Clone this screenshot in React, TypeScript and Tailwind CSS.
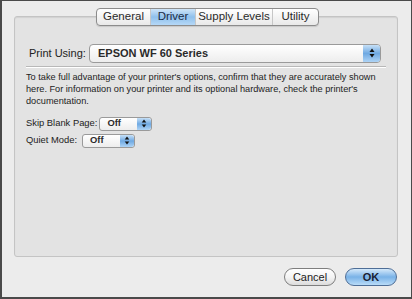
export default function App() {
  const tabs = ["General", "Driver", "Supply Levels", "Utility"];
  const tabW: Record<string, string> = {
    General: "w-[53px]",
    Driver: "w-[45px]",
    "Supply Levels": "w-[77px]",
    Utility: "w-[46px]",
  };

  return (
    <div
      className="w-[412px] h-[299px] bg-[#ececec] border-l-2 border-r border-t border-b-2 border-[#4a4a4a] text-[#111] relative"
      style={{ fontFamily: '"Liberation Sans", Arial, sans-serif' }}
    >
      {/* group box */}
      <div className="absolute left-[12px] top-[15px] w-[384px] h-[241px] bg-[#e3e3e3] border border-[#c4c4c4] rounded-[3px] shadow-[inset_0_1px_1px_rgba(0,0,0,0.08)]">
        <div className="pt-[26px] px-[11px]">
          {/* print using */}
          <div className="flex items-center h-[20px]">
            <span className="text-[11px] ml-[3px] w-[60px] text-[#222]">Print Using:</span>
            <div className="flex-1 mr-[5px] h-[19px] flex items-center bg-gradient-to-b from-white to-[#ededed] border border-[#9a9a9a] rounded-[4px] relative">
              <span className="text-[11px] font-bold ml-[8px] text-[#2a2a2a]">EPSON WF 60 Series</span>
              <Arrows big />
            </div>
          </div>
          <div className="mt-[3px] border-t border-[#b8b8b8] border-b-white border-b h-0" />
          <p className="mt-[3px] text-[9.2px] leading-[12px] text-[#222]">
            To take full advantage of your printer's options, confirm that they are accurately shown here. For information on your printer and its optional hardware, check the printer's documentation.
          </p>
          <div className="mt-[9px] flex items-center h-[15px]">
            <span className="text-[9.4px] mr-[2px] text-[#222]">Skip Blank Page:</span>
            <Popup />
          </div>
          <div className="mt-[2px] flex items-center h-[15px]">
            <span className="text-[9.4px] mr-[5px] text-[#222]">Quiet Mode:</span>
            <Popup />
          </div>
        </div>
      </div>

      {/* tabs */}
      <div className="absolute left-[94px] top-[7px] flex h-[18px] border border-[#8c8c8c] rounded-[4px] overflow-hidden bg-gradient-to-b from-white to-[#e9e9e9] shadow-[0_1px_1px_rgba(0,0,0,0.12)]">
        {tabs.map((t, i) => (
          <div
            key={t}
            className={
              "flex items-center justify-center text-[11.5px] " +
              tabW[t] +
              (i > 0 ? " border-l border-[#c7c7c7]" : "") +
              (t === "Driver"
                ? " bg-gradient-to-b from-[#cfe5f8] via-[#8fc0ec] to-[#b5d8f7] text-[#1b2b45]"
                : " text-[#2a2a2a]")
            }
          >
            {t}
          </div>
        ))}
      </div>

      {/* buttons */}
      <div className="absolute right-[14px] top-[267px] flex gap-[9px]">
        <div className="w-[52px] h-[18px] rounded-full border border-[#7e7e7e] bg-gradient-to-b from-white via-[#f4f4f4] to-[#dcdcdc] flex items-center justify-center text-[11px] text-[#222]">
          Cancel
        </div>
        <div className="w-[52px] h-[18px] rounded-full border border-[#4e6e97] bg-gradient-to-b from-[#d5e9fa] via-[#79b2e7] to-[#b9dcf8] flex items-center justify-center text-[11px] font-bold text-[#1a2233]">
          OK
        </div>
      </div>
    </div>
  );
}

function Popup() {
  return (
    <div className="w-[53px] h-[14px] relative flex items-center bg-gradient-to-b from-white to-[#ededed] border border-[#9a9a9a] rounded-[3px]">
      <span className="text-[9.4px] font-bold ml-[7px] text-[#2a2a2a]">Off</span>
      <Arrows />
    </div>
  );
}

function Arrows({ big }: { big?: boolean }) {
  return (
    <div
      className={
        "absolute right-0 top-0 bottom-0 flex items-center justify-center bg-gradient-to-b from-[#c6e0f7] via-[#6fa9e2] to-[#aed4f6] rounded-r-[3px] " +
        (big ? "w-[17px]" : "w-[14px]")
      }
    >
      <svg width="6" height={big ? 10 : 9} viewBox="0 0 6 10">
        <path d="M3 0.5 L5.5 4 H0.5 Z" fill="#111" />
        <path d="M3 9.5 L5.5 6 H0.5 Z" fill="#111" />
      </svg>
    </div>
  );
}
